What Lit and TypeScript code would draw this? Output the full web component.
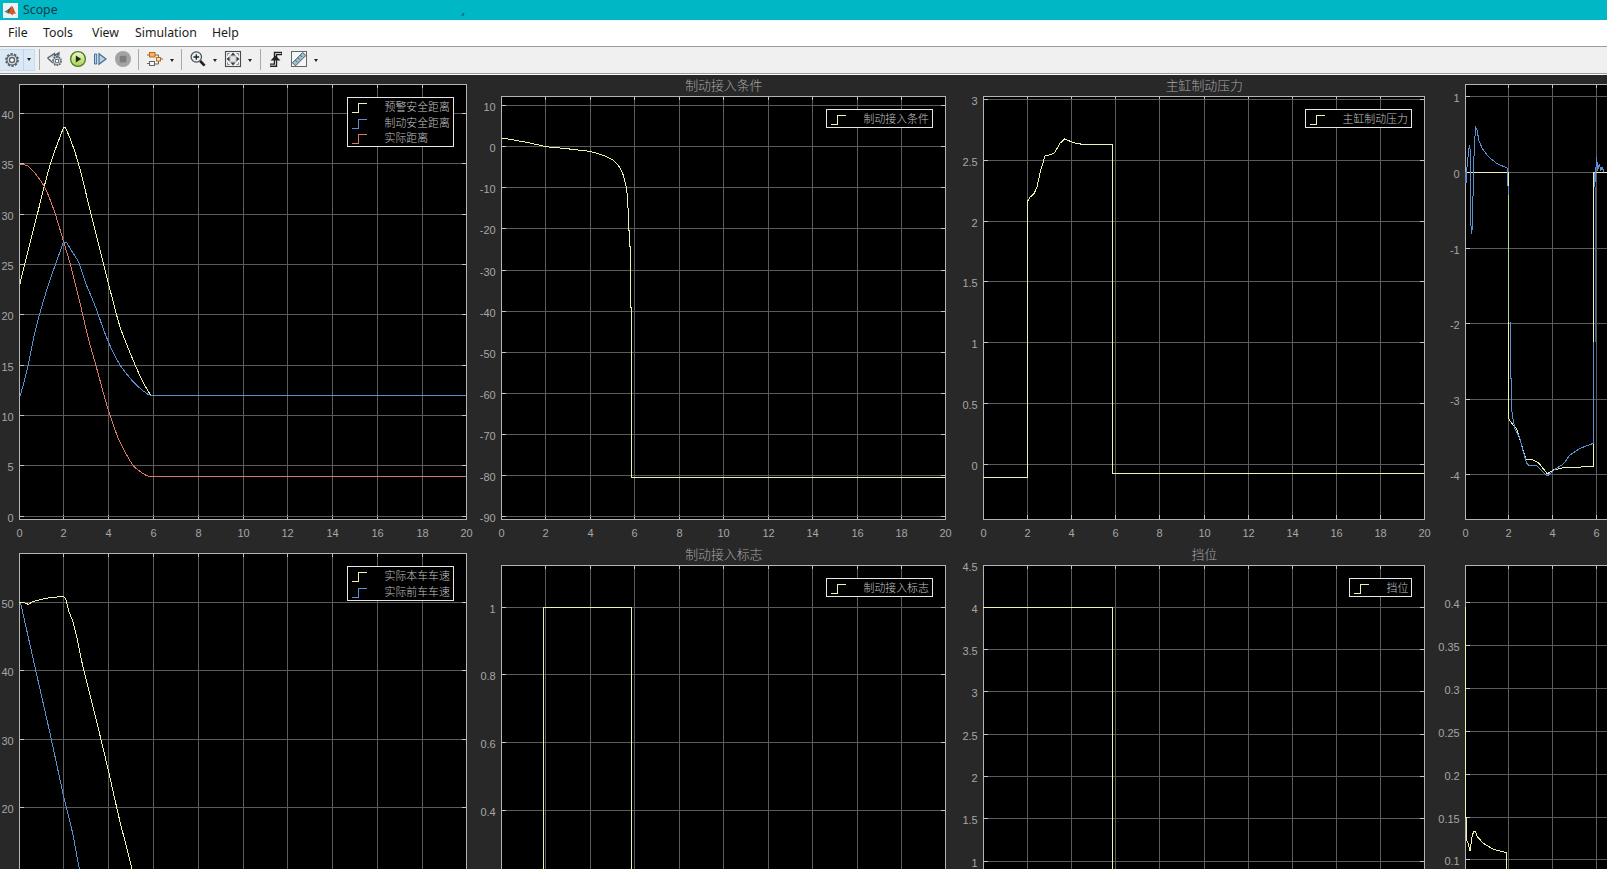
import { LitElement, html, svg, css, nothing } from "lit";
import { customElement, property } from "lit/decorators.js";

type Tick = [number, string];
interface Series { color: string; points: string; smooth?: boolean; }
interface Chart {
  view: [number, number, number, number];
  box: [number, number, number, number];
  title?: string;
  xTicks: number[];
  yTicks: Tick[];
  series: Series[];
  legend?: { names: string[]; left: number };
}

const YELLOW = "#f1f2ae";
const BLUE = "#5a8fd2";
const RED = "#d97a66";
const GREEN = "#a9dc8c";
const SERIES_COLORS = [YELLOW, BLUE, RED];

const X1 = [19, 63, 108, 153, 198, 243, 287, 332, 377, 422, 466];
const X2 = [501, 545, 590, 634, 679, 723, 768, 812, 857, 901, 945];
const X3 = [983, 1027, 1071, 1115, 1159, 1204, 1248, 1292, 1336, 1380, 1424];
const X4 = [1465, 1508, 1552, 1596];

const CHARTS: Chart[] = [
  {
    view: [0, 75, 477, 466], box: [19, 84, 466, 519], xTicks: X1,
    yTicks: [[113, "40"], [163, "35"], [214, "30"], [264, "25"], [314, "20"], [365, "15"], [415, "10"], [465, "5"], [516, "0"]],
    legend: { names: ["预警安全距离", "制动安全距离", "实际距离"], left: 347 },
    series: [
      { smooth: true, color: YELLOW, points: "20,283.5 25,263 36.7,216.7 50.7,163 63.5,127.5 65.5,127.5 71.7,142.7 78.3,163 90.7,213 103.3,263 112.7,300 120,326.7 134.3,363 142.3,380.7 150.7,395.5" },
      { smooth: true, color: RED, points: "19.5,164 27.3,165.7 35,173.3 44,186 53.3,208.3 63.3,240.7 70,263.3 79.5,301 88.3,338.3 96.7,368.3 108.3,410 118.3,438.3 126.7,455 134.3,466.7 141.7,472.7 149,476.5 466,476.5" },
      { smooth: true, color: BLUE, points: "20.3,395.5 26.7,371.7 35,331.7 42.5,304 50,280 56,263 63.5,242 66.3,242 71.7,251 78.3,261.7 85.7,283.3 94,303 108.3,341.7 120,365 131.7,380 143.3,391 150.7,395.5 466,395.5" },
    ],
  },
  {
    view: [477, 75, 479, 466], box: [501, 96, 945, 519], xTicks: X2, title: "制动接入条件",
    yTicks: [[105, "10"], [146, "0"], [187, "-10"], [228, "-20"], [270, "-30"], [311, "-40"], [352, "-50"], [393, "-60"], [434, "-70"], [475, "-80"], [516, "-90"]],
    legend: { names: ["制动接入条件"], left: 826 },
    series: [
      { color: YELLOW, points: "501.5,138 508.3,139 530,143 546,146.7 566.7,148.7 590,151.3 603.3,155.3 613.3,160 619.3,166.7 623.3,175 626.7,188.3 627.7,202.7 628.7,220 629.5,246 630.5,247 630.5,307 631.5,308 631.5,477.5 945,477.5" },
    ],
  },
  {
    view: [956, 75, 477, 466], box: [983, 96, 1424, 519], xTicks: X3, title: "主缸制动压力",
    yTicks: [[99, "3"], [160, "2.5"], [221, "2"], [281, "1.5"], [342, "1"], [403, "0.5"], [464, "0"]],
    legend: { names: ["主缸制动压力"], left: 1305 },
    series: [
      { color: YELLOW, points: "983,477.5 1027.5,477.5 1027.5,201.5 1030,197.3 1034.3,193.3 1037.3,186 1040,172.7 1045,156 1050,154.7 1054.3,153 1060,143.3 1064.7,138.7 1070,141.3 1075,143 1083.3,144.5 1112.5,144.5 1112.5,473.5 1424,473.5" },
    ],
  },
  {
    view: [1433, 75, 174, 466], box: [1465, 84, 1903, 519], xTicks: X4,
    yTicks: [[96, "1"], [172, "0"], [248, "-1"], [323, "-2"], [399, "-3"], [474, "-4"]],
    series: [
      { color: YELLOW, points: "1465,172.5 1508.5,172.5 1508.5,418.3 1511.7,423.3 1516.7,429 1520,440 1526,459.3 1533.3,460 1539,463.3 1547.3,473.7 1553.3,470 1563.3,467.7 1576,467.3 1593.5,466.3 1593.5,172.5 1607,172.5" },
      { color: BLUE, points: "1465.7,172 1466,183 1466.7,170 1469.3,145 1470.5,152 1470.7,221.7 1471.7,234 1472.7,222 1473.3,173 1474.7,140 1475.7,127.5 1476.7,128.7 1479,140.7 1482.3,148.7 1488.3,156.7 1496.7,163.3 1507.5,168.3 1507.5,185 1508.5,187 1508.5,195" },
      { color: GREEN, points: "1508.5,195 1508.5,322" },
      { color: BLUE, points: "1510.5,322 1510.5,377 1511.5,380 1511.5,407 1512.5,416.7 1515,429.3 1519.3,436.7 1523.3,451.7 1526.7,463.3 1529,465.3 1536,465.3 1547.3,476 1555,469.3 1563.3,464 1570,455 1580,448.3 1593.5,443.3 1593.5,342" },
      { color: "#3f6896", points: "1595.5,342 1595.5,187" },
      { color: BLUE, points: "1594.5,173 1594.7,187 1596.7,157.3 1597.6,171 1599.3,164 1600.8,171 1602,167 1604,172" },
    ],
  },
  {
    view: [0, 541, 477, 328], box: [19, 553, 466, 980], xTicks: X1,
    yTicks: [[602, "50"], [670, "40"], [739, "30"], [807, "20"]],
    legend: { names: ["实际本车车速", "实际前车车速"], left: 347 },
    series: [
      { color: BLUE, points: "20.7,603.3 36,671.7 50,733.3 63.3,795 72.7,833.3 79.5,870" },
      { smooth: true, color: YELLOW, points: "19.5,603 23.3,602.7 28.3,604.3 32.3,602 48.3,598 63.3,596.5 65,598 69,611.7 72.7,621 83.3,668.3 96.7,721.7 109,773.3 120,821.7 126,845 132.2,870" },
    ],
  },
  {
    view: [477, 541, 479, 328], box: [501, 565, 945, 980], xTicks: X2, title: "制动接入标志",
    yTicks: [[607, "1"], [674, "0.8"], [742, "0.6"], [810, "0.4"]],
    legend: { names: ["制动接入标志"], left: 826 },
    series: [{ color: YELLOW, points: "543.5,870 543.5,607.5 631.5,607.5 631.5,870" }],
  },
  {
    view: [956, 541, 477, 328], box: [983, 565, 1424, 980], xTicks: X3, title: "挡位",
    yTicks: [[565, "4.5"], [607, "4"], [649, "3.5"], [691, "3"], [734, "2.5"], [776, "2"], [818, "1.5"], [861, "1"]],
    legend: { names: ["挡位"], left: 1349 },
    series: [{ color: YELLOW, points: "983,607.5 1112.5,607.5 1112.5,870" }],
  },
  {
    view: [1433, 541, 174, 328], box: [1465, 565, 1903, 980], xTicks: X4,
    yTicks: [[602, "0.4"], [645, "0.35"], [688, "0.3"], [731, "0.25"], [774, "0.2"], [817, "0.15"], [859, "0.1"]],
    series: [{ color: YELLOW, points: "1465.5,607 1465.5,817 1466.5,818 1466.5,840 1467.7,842 1470,851 1472,836.7 1473.7,831.3 1475.3,831.3 1477.3,836.7 1483.3,843.3 1493.3,849.3 1506.5,852.7 1506.5,870" }],
  },
];

/** Path through the points; smooth series get curved joins except at sharp corners. */
function tracePath({ points, smooth }: Series): string {
  const p = points.split(" ").map((s) => s.split(",").map(Number));
  if (!smooth) return "M" + p.map((q) => q.join(" ")).join("L");
  const unit = (a: number[], b: number[]) => {
    const d = Math.hypot(b[0] - a[0], b[1] - a[1]) || 1;
    return [(b[0] - a[0]) / d, (b[1] - a[1]) / d];
  };
  let d = `M${p[0].join(" ")}`;
  for (let i = 0; i < p.length - 1; i++) {
    const a = p[i], b = p[i + 1];
    const own = unit(a, b);
    const direction = (j: number) => {
      if (j === 0 || j === p.length - 1) return own;
      const u = unit(p[j - 1], p[j]), v = unit(p[j], p[j + 1]);
      if (u[0] * v[0] + u[1] * v[1] < 0.8) return own;
      return unit([0, 0], [u[0] + v[0], u[1] + v[1]]);
    };
    const length = Math.hypot(b[0] - a[0], b[1] - a[1]);
    if (length > 100) { d += `L${b.join(" ")}`; continue; }
    const s = direction(i), e = direction(i + 1), k = length / 3;
    d += `C${a[0] + s[0] * k} ${a[1] + s[1] * k} ${b[0] - e[0] * k} ${b[1] - e[1] * k} ${b[0]} ${b[1]}`;
  }
  return d;
}

@customElement("scope-chart")
class ScopeChart extends LitElement {
  @property({ attribute: false }) chart!: Chart;

  static styles = css`
    :host { display: block; min-width: 0; overflow: hidden; }
    svg { display: block; }
    .grid, .axis, .tick, .line, .legend-box { fill: none; stroke-width: 1; shape-rendering: crispEdges; }
    .face { fill: #000; }
    .grid { stroke: #5b5b5b; }
    .axis { stroke: #b4b4b4; }
    .tick { stroke: #c4c4c4; }
    .legend-box { fill: #000; stroke: #e6e6e6; }
    .label { font: 11px "Liberation Sans", Arial, sans-serif; fill: #a6a6a6; }
    .end { text-anchor: end; }
    .mid { text-anchor: middle; }
    .title { font: 300 12.9px "Noto Sans CJK SC", sans-serif; fill: #a6a6a6; text-anchor: middle; }
    .name { font: 300 10.9px "Noto Sans CJK SC", sans-serif; fill: #c4c4c4; }
  `;

  private renderLegend(names: string[], left: number) {
    const [, top, right] = this.chart.box;
    const x = left + 0.5;
    const y = top + 13.5;
    const height = [18, 34, 49][names.length - 1];
    return svg`
      <rect class="legend-box" x=${x} y=${y} width=${right - 13 - left} height=${height}></rect>
      ${names.map((name, i) => {
        const high = y + 6 + Math.round(i * 15.6);
        return svg`
          <path class="line" stroke=${SERIES_COLORS[i]} d=${`M${x + 4} ${high + 9}H${x + 11}V${high}H${x + 19}`}></path>
          <text class="name" x=${x + 37} y=${y + 13.5 + i * 15.5}>${name}</text>`;
      })}`;
  }

  render() {
    const c = this.chart;
    const [vx, vy, vw, vh] = c.view;
    const [l, t, r, b] = c.box;
    const showXLabels = b < vy + vh;
    return html`<svg width=${vw} height=${vh} viewBox=${c.view.join(" ")}>
      <rect class="face" x=${l} y=${t} width=${r - l} height=${b - t}></rect>
      ${c.xTicks.map((x, i) => svg`
        <path class="grid" d=${`M${x + 0.5} ${t}V${b}`}></path>
        <path class="tick" d=${`M${x + 0.5} ${t}v4M${x + 0.5} ${b}v-4`}></path>
        ${showXLabels ? svg`<text class="label mid" x=${x + 0.6} y=${b + 18}>${i * 2}</text>` : nothing}`)}
      ${c.yTicks.map(([y, text]) => svg`
        <path class="grid" d=${`M${l} ${y + 0.5}H${r}`}></path>
        <path class="tick" d=${`M${l} ${y + 0.5}h5M${r + 1} ${y + 0.5}h-5`}></path>
        <text class="label end" x=${l - 5.3} y=${y + 5.7}>${text}</text>`)}
      <rect class="axis" x=${l + 0.5} y=${t + 0.5} width=${r - l} height=${b - t}></rect>
      ${c.series.map((s) => svg`<path class="line" stroke=${s.color} d=${tracePath(s)}></path>`)}
      ${c.title ? svg`<text class="title" x=${(l + r) / 2 + 0.8} y=${t - 5.6}>${c.title}</text>` : nothing}
      ${c.legend ? this.renderLegend(c.legend.names, c.legend.left) : nothing}
    </svg>`;
  }
}

const gear = (cx: number, cy: number, s: number) => svg`
  <g transform=${`translate(${cx} ${cy}) scale(${s})`}>
    <circle r="6" fill="none" stroke="#59626b" stroke-width="1.8" stroke-dasharray="2.4 1.31"></circle>
    <circle r="5" fill="#e6eaed" stroke="#59626b" stroke-width="1.1"></circle>
    <circle r="2.5" fill="#fff" stroke="#59626b" stroke-width="1.4"></circle>
  </g>`;

const ICONS = {
  gear: gear(9, 9, 1),
  configure: svg`
    <path d="M1.5 8 8.5 3.5v2.2L12 4v3M1.5 8l5 4.5" fill="#c9d5de" stroke="#56616c" stroke-width="1.3"></path>
    <path d="M8.5 5.500 13 2.500v3" fill="none" stroke="#56616c" stroke-width="1.2"></path>
    ${gear(11, 11, 0.72)}`,
  play: svg`
    <defs><linearGradient id="run" x1="0" y1="0" x2="0" y2="1">
      <stop offset="0" stop-color="#eff8cf"></stop><stop offset="1" stop-color="#a9d24e"></stop>
    </linearGradient></defs>
    <circle cx="9" cy="9" r="7.4" fill="url(#run)" stroke="#4d7a20" stroke-width="1.3"></circle>
    <path d="M6.800 5.500v7l5.400-3.500z" fill="#1c2a12"></path>`,
  step: svg`
    <path d="M3.5 4h2.2v10H3.5z" fill="#b7d3ec" stroke="#466c96"></path>
    <path d="M8 3.8v10.400L15 9z" fill="#b7d3ec" stroke="#466c96" stroke-width="1.2"></path>`,
  stop: svg`
    <circle cx="9" cy="9" r="8" fill="#a3a3a3"></circle>
    <rect x="5.8" y="5.8" width="6.600" height="6.600" fill="#7d7d7d"></rect>`,
  blocks: svg`
    <path d="M1 5h3M8.500 5h4v2.500M14.500 9H17M12.500 11v3h-4M4 13.500H1" fill="none" stroke="#666"></path>
    <rect x="3.5" y="2.5" width="5.5" height="4.5" fill="#f5b45f" stroke="#bd6a15"></rect>
    <rect x="10.500" y="7.500" width="4" height="3.500" fill="#fbe3bd" stroke="#bd6a15"></rect>
    <rect x="3.500" y="11.500" width="5" height="4" fill="#f4f4f4" stroke="#666"></rect>`,
  zoom: svg`
    <circle cx="7.300" cy="7" r="5.200" fill="#e6f1f6" stroke="#454b50" stroke-width="1.2"></circle>
    <path d="M4.500 7h5.600M7.300 4.200v5.600" stroke="#222" stroke-width="1.3"></path>
    <path d="m11.200 11 4.400 4.600" stroke="#222" stroke-width="2.6"></path>`,
  fit: svg`
    <rect x="1.500" y="1.500" width="15" height="15" fill="#f2f2f2" stroke="#4a4a4a" stroke-width="1.1"></rect>
    <rect x="6" y="6" width="6" height="6" fill="#dfe7ec" stroke="#b8c0c6"></rect>
    <path d="M9 2.500 6.500 5.500h5zM9 15.500l-2.500-3h5zM2.500 9l3-2.500v5zM15.500 9l-3-2.500v5z" fill="#3c3c3c"></path>
    <path d="M3.500 5.500v-2h2M12.500 3.500h2v2M3.500 12.500v2h2M12.500 14.500h2v-2" fill="none" stroke="#888"></path>`,
  trigger: svg`
    <path d="M3 15.200h5.500V3.500H15" fill="none" stroke="#222" stroke-width="3.4"></path>
    <path d="M3.200 15.200h5.300V3.500h5.800" fill="none" stroke="#c9ced2" stroke-width="1"></path>
    <path d="m3.500 10.500 5-5 5 5z" fill="#222"></path>`,
  ruler: svg`
    <rect x="1.500" y="1.500" width="15" height="15" fill="#f4f6f7" stroke="#666"></rect>
    <path d="M2.500 12.800 12.800 2.500l3 3L5.500 15.800z" fill="#9cc0cf" stroke="#47555e"></path>
    <path d="m5.500 10.300 1.600 1.600M8 7.800l1.600 1.600M10.500 5.300l1.600 1.600" stroke="#47555e"></path>`,
};

type Tool = { icon: keyof typeof ICONS; menu?: boolean } | "sep";
const TOOLS: Tool[] = [
  "sep",
  { icon: "configure" }, { icon: "play" }, { icon: "step" }, { icon: "stop" },
  "sep",
  { icon: "blocks", menu: true },
  "sep",
  { icon: "zoom", menu: true }, { icon: "fit", menu: true },
  "sep",
  { icon: "trigger" }, { icon: "ruler", menu: true },
];

@customElement("app-root")
class AppRoot extends LitElement {
  static styles = css`
    :host {
      display: flex; flex-direction: column; height: 869px; width: 1607px; overflow: hidden;
      background: #282828; font: 12.3px "Noto Sans", sans-serif; color: #1c1c1c;
    }
    .titlebar { display: flex; align-items: center; gap: 5px; height: 20px; padding-left: 3px; background: #00b7c6; color: #123c46; }
    .titlebar span { line-height: 18px; padding-bottom: 1px; }
    .speck { margin-left: 399px; margin-top: 9px; width: 2px; height: 3px; background: #1560ad; transform: skewX(-20deg); }
    .menubar { display: grid; grid-template-columns: 35px 49px 43px 77px auto; justify-content: start; height: 26px; padding-left: 8px; line-height: 26px; background: #fff; }
    .toolbar { display: flex; align-items: center; height: 26px; background: #f0f0f0; border-top: 1px solid #9b9b9b; border-bottom: 1px solid #9b9b9b; }
    .rule { height: 1px; background: #fff; }
    .active { display: flex; align-items: center; height: 22px; margin-bottom: 1px; width: 35px; background: #dbe9f6; box-sizing: border-box; border: 1px solid #c5dcf0; border-left: 0; }
    .active svg { margin-left: 3px; margin-right: 2px; }
    .active .caret-cell { width: 11px; height: 20px; border-left: 1px solid #bcd5ea; }
    .sep { width: 1px; height: 21px; background: #a9a9a9; margin: 0 4px 2px 3.5px; }
    .tool { display: flex; align-items: center; justify-content: center; width: 22.8px; margin-bottom: 2px; }
    .caret-cell { display: flex; align-items: center; justify-content: center; width: 12px; }
    .caret { border: 2.5px solid transparent; border-top: 3px solid #222; border-bottom: 0; }
    .scopes { display: grid; grid-template-columns: 477px 479px 477px 174px; grid-template-rows: 466px 328px; }
    svg { flex: none; }
  `;

  private icon(name: keyof typeof ICONS) {
    return html`<svg width="18" height="18" viewBox="0 0 18 18">${ICONS[name]}</svg>`;
  }

  private caret() {
    return html`<span class="caret-cell"><span class="caret"></span></span>`;
  }

  render() {
    return html`
      <div class="titlebar">
        <svg width="15" height="15" viewBox="0 0 15 15">
          <rect width="15" height="15" fill="#eef1f3"></rect>
          <path d="M1.500 8.500 5 6.500 7.500 8 5 10.500z" fill="#4d7d99"></path>
          <path d="M5 6.500C7 5.500 7.500 3.200 9 3L6.800 9.500 5 10.500z" fill="#7d4a3a"></path>
          <path d="M9 3c1.500.8 2.500 5.500 4.500 8.500-1.700-1.300-2.700-1.300-4.300 1C8.400 10.700 7 10 5.200 10.600 7 8.700 8 5.500 9 3z" fill="#cf5a2c"></path>
        </svg>
        <span>Scope</span>
        <i class="speck"></i>
      </div>
      <nav class="menubar">
        ${["File", "Tools", "View", "Simulation", "Help"].map((m) => html`<span>${m}</span>`)}
      </nav>
      <div class="toolbar">
        <div class="active">${this.icon("gear")}${this.caret()}</div>
        ${TOOLS.map((t) => t === "sep"
          ? html`<i class="sep"></i>`
          : html`<span class="tool">${this.icon(t.icon)}</span>${t.menu ? this.caret() : nothing}`)}
      </div>
      <div class="rule"></div>
      <main class="scopes">
        ${CHARTS.map((c) => html`<scope-chart .chart=${c}></scope-chart>`)}
      </main>`;
  }
}
